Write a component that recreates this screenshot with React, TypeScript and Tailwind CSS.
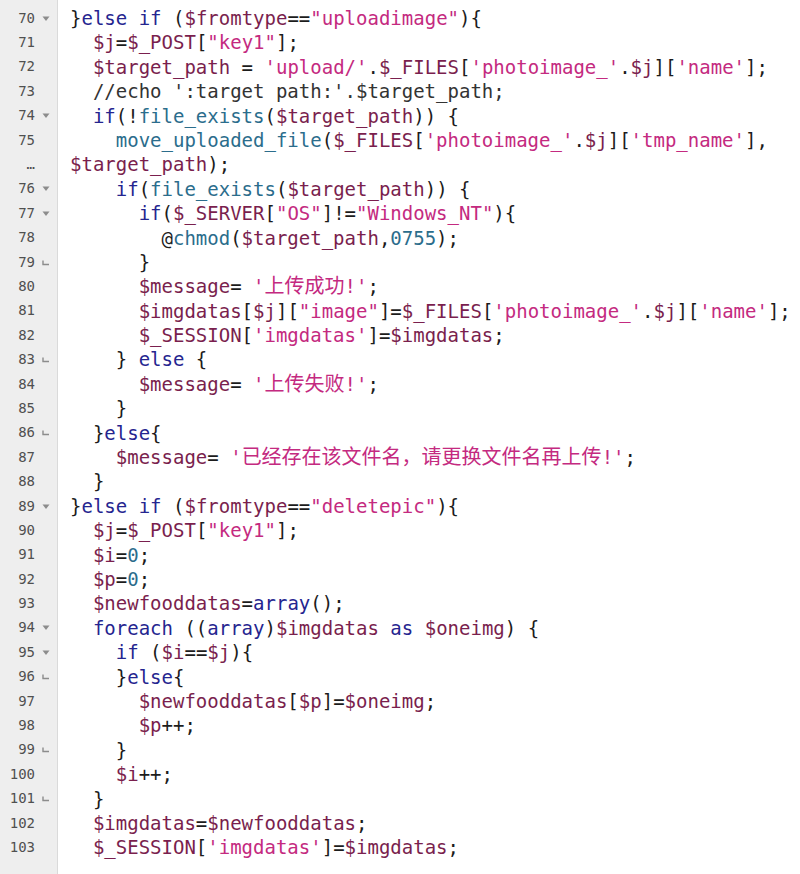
import type { ReactNode } from "react";

type Mark = "open" | "close" | "wrap" | "";

type Row = {
  no: string
  mark: Mark
  code: string
}

const rows: Row[] = [
  { no: "70", mark: "open", code: `}else if ($fromtype=="uploadimage"){` },
  { no: "71", mark: "", code: `  $j=$_POST["key1"];` },
  { no: "72", mark: "", code: `  $target_path = 'upload/'.$_FILES['photoimage_'.$j]['name'];` },
  { no: "73", mark: "", code: `  //echo ':target path:'.$target_path;` },
  { no: "74", mark: "open", code: `  if(!file_exists($target_path)) {` },
  { no: "75", mark: "", code: `    move_uploaded_file($_FILES['photoimage_'.$j]['tmp_name'],` },
  { no: "…", mark: "wrap", code: `$target_path);` },
  { no: "76", mark: "open", code: `    if(file_exists($target_path)) {` },
  { no: "77", mark: "open", code: `      if($_SERVER["OS"]!="Windows_NT"){` },
  { no: "78", mark: "", code: `        @chmod($target_path,0755);` },
  { no: "79", mark: "close", code: `      }` },
  { no: "80", mark: "", code: `      $message= '上传成功!';` },
  { no: "81", mark: "", code: `      $imgdatas[$j]["image"]=$_FILES['photoimage_'.$j]['name'];` },
  { no: "82", mark: "", code: `      $_SESSION['imgdatas']=$imgdatas;` },
  { no: "83", mark: "close", code: `    } else {` },
  { no: "84", mark: "", code: `      $message= '上传失败!';` },
  { no: "85", mark: "", code: `    }` },
  { no: "86", mark: "close", code: `  }else{` },
  { no: "87", mark: "", code: `    $message= '已经存在该文件名，请更换文件名再上传!';` },
  { no: "88", mark: "", code: `  }` },
  { no: "89", mark: "open", code: `}else if ($fromtype=="deletepic"){` },
  { no: "90", mark: "", code: `  $j=$_POST["key1"];` },
  { no: "91", mark: "", code: `  $i=0;` },
  { no: "92", mark: "", code: `  $p=0;` },
  { no: "93", mark: "", code: `  $newfooddatas=array();` },
  { no: "94", mark: "open", code: `  foreach ((array)$imgdatas as $oneimg) {` },
  { no: "95", mark: "open", code: `    if ($i==$j){` },
  { no: "96", mark: "close", code: `    }else{` },
  { no: "97", mark: "", code: `      $newfooddatas[$p]=$oneimg;` },
  { no: "98", mark: "", code: `      $p++;` },
  { no: "99", mark: "close", code: `    }` },
  { no: "100", mark: "", code: `    $i++;` },
  { no: "101", mark: "close", code: `  }` },
  { no: "102", mark: "", code: `  $imgdatas=$newfooddatas;` },
  { no: "103", mark: "", code: `  $_SESSION['imgdatas']=$imgdatas;` },
]

const tokenRx =
  /('[^']*'|"[^"]*"|\/\/.*$|\$\w+|\b(?:else|if|foreach|array|as)\b|\b(?:file_exists|move_uploaded_file|chmod)\b|\b\d+\b)/g

// chinese runs are a bit wider than the mono cells in the shot
function withCjk(text: string, key: string): ReactNode[] {
  return text.split(/([\u3000-\u9fff\uff00-\uffef]+)/).map((part, i) =>
    /[\u3000-\u9fff\uff00-\uffef]/.test(part) ? (
      <span key={key + i} className="text-[20px]">{part}</span>
    ) : (
      part
    )
  )
}

function highlight(code: string) {
  const out: ReactNode[] = []
  let last = 0
  let n = 0
  for (const m of code.matchAll(tokenRx)) {
    const t = m[0]
    const at = m.index ?? 0
    if (at > last) out.push(code.slice(last, at))
    let cls = "text-[#1c1c1c]"
    if (t.startsWith("//")) cls = "text-[#333333]"
    else if (t.startsWith("'") || t.startsWith('"')) cls = "text-[#c42a80]"
    else if (t.startsWith("$")) cls = "text-[#7a1f4e]"
    else if (/^\d+$/.test(t)) cls = "text-[#2b6d8c]"
    else if (/^(else|if|foreach|array|as)$/.test(t)) cls = "text-[#25258f]"
    else cls = "text-[#2b6d8c]"
    out.push(
      <span key={n++} className={cls}>
        {withCjk(t, "c" + n)}
      </span>
    )
    last = at + t.length
  }
  if (last < code.length) out.push(code.slice(last))
  return out
}

function FoldMark({ mark }: { mark: Mark }) {
  if (mark === "open") {
    return (
      <svg width="8" height="6" viewBox="0 0 8 6">
        <path d="M0.5 0.5 L7.5 0.5 L4 5 Z" fill="#8c8c8c" />
      </svg>
    )
  }
  if (mark === "close") {
    return (
      <svg width="8" height="6" viewBox="0 0 8 6">
        <path d="M1 0.5 V4.5 H7" stroke="#8c8c8c" strokeWidth="1.4" fill="none" />
      </svg>
    )
  }
  return null
}

export default function App() {
  return (
    <div className="flex h-[874px] w-[800px] overflow-hidden bg-white font-['DejaVu_Sans_Mono','Noto_Sans_CJK_SC',monospace]">
      <div className="w-[58px] shrink-0 border-r border-[#dadada] bg-[#eeeeee] pt-[6px]">
        {rows.map((r, i) => (
          <div key={i} className="flex h-[24.4px] items-center">
            <span className="w-[35px] text-right text-[14px] text-[#505050]">{r.no}</span>
            <span className="flex w-[22px] items-center justify-center pt-[1px]">
              <FoldMark mark={r.mark} />
            </span>
          </div>
        ))}
      </div>
      <div className="flex-1 pt-[6px] pl-[12px]">
        {rows.map((r, i) => (
          <div key={i} className="h-[24.4px] whitespace-pre text-[19px] leading-[24.4px] text-[#1c1c1c]">
            {highlight(r.code)}
          </div>
        ))}
      </div>
    </div>
  )
}
